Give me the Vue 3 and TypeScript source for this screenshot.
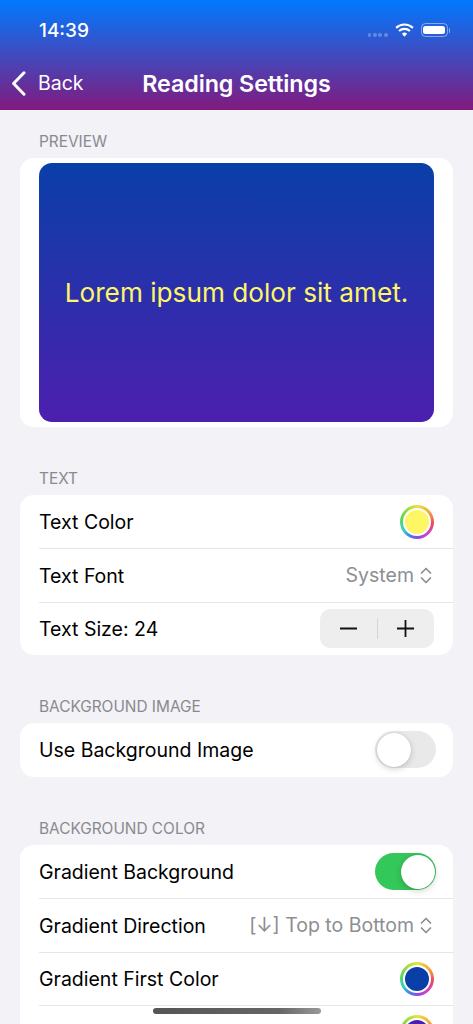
<script setup lang="ts">
type Row = { label: string; kind: 'color' | 'picker' | 'stepper' | 'toggle'; value?: string; on?: boolean };
type Section = { title: string; rows: Row[] };

const sections: Section[] = [
  {
    title: 'TEXT',
    rows: [
      { label: 'Text Color', kind: 'color', value: '#fff666' },
      { label: 'Text Font', kind: 'picker', value: 'System' },
      { label: 'Text Size: 24', kind: 'stepper' },
    ],
  },
  {
    title: 'BACKGROUND IMAGE',
    rows: [{ label: 'Use Background Image', kind: 'toggle', on: false }],
  },
  {
    title: 'BACKGROUND COLOR',
    rows: [
      { label: 'Gradient Background', kind: 'toggle', on: true },
      { label: 'Gradient Direction', kind: 'picker', value: '[↓] Top to Bottom' },
      { label: 'Gradient First Color', kind: 'color', value: '#0a3fa8' },
      { label: 'Gradient Second Color', kind: 'color', value: '#4c1fae' },
    ],
  },
];
</script>

<template>
  <div class="phone">
    <header class="nav">
      <div class="status">
        <span class="time">14:39</span>
        <div class="status-icons">
          <span class="dots"><i></i><i></i><i></i><i></i></span>
          <svg class="wifi" width="19" height="14" viewBox="0 0 20 15" aria-hidden="true">
            <path d="M1 5.2a13 13 0 0 1 18 0" fill="none" stroke="#fff" stroke-width="2.3" />
            <path d="M4.2 8.6a8.4 8.4 0 0 1 11.6 0" fill="none" stroke="#fff" stroke-width="2.3" />
            <path d="M7.2 11.6a4 4 0 0 1 5.6 0L10 14.6z" fill="#fff" />
          </svg>
          <span class="battery"><span class="battery-fill"></span></span>
          <span class="battery-cap"></span>
        </div>
      </div>
      <div class="bar">
        <div class="back">
          <svg width="15" height="25" viewBox="0 0 15 25" aria-hidden="true">
            <path d="M13 1.8 2.6 12.5 13 23.2" fill="none" stroke="#fff" stroke-width="3" stroke-linecap="round" stroke-linejoin="round" />
          </svg>
          <span>Back</span>
        </div>
        <h1>Reading Settings</h1>
      </div>
    </header>

    <main class="content">
      <section class="section first">
        <h2>PREVIEW</h2>
        <div class="card preview-card">
          <div class="preview">Lorem ipsum dolor sit amet.</div>
        </div>
      </section>

      <section v-for="section in sections" :key="section.title" class="section">
        <h2>{{ section.title }}</h2>
        <div class="card">
          <div v-for="row in section.rows" :key="row.label" class="row">
            <span class="label">{{ row.label }}</span>

            <span v-if="row.kind === 'color'" class="well">
              <span class="well-inner" :style="{ background: row.value }"></span>
            </span>

            <span v-else-if="row.kind === 'picker'" class="picker">
              <span>{{ row.value }}</span>
              <svg width="12" height="17" viewBox="0 0 12 17" aria-hidden="true">
                <path d="M1.5 6 6 1.5 10.5 6M1.5 11 6 15.5 10.5 11" fill="none" stroke="#8e8e92" stroke-width="1.7" stroke-linecap="round" stroke-linejoin="round" />
              </svg>
            </span>

            <span v-else-if="row.kind === 'stepper'" class="stepper">
              <svg width="17" height="17" viewBox="0 0 17 17" aria-hidden="true">
                <path d="M0 8.5h17" stroke="#111" stroke-width="1.8" />
              </svg>
              <i class="divider"></i>
              <svg width="17" height="17" viewBox="0 0 17 17" aria-hidden="true">
                <path d="M0 8.5h17M8.5 0v17" stroke="#111" stroke-width="1.8" />
              </svg>
            </span>

            <span v-else class="toggle" :class="{ on: row.on }"><span class="knob"></span></span>
          </div>
        </div>
      </section>
    </main>

    <div class="home"></div>
  </div>
</template>

<style scoped>
.phone {
  position: relative;
  width: 473px;
  height: 1024px;
  overflow: hidden;
  background: #f2f2f7;
  font-family: Inter, "Liberation Sans", sans-serif;
  color: #000;
}
.nav {
  height: 110px;
  box-sizing: border-box;
  background: linear-gradient(180deg, #007aff 0%, #811a7d 100%);
  color: #fff;
}
.status {
  height: 57px;
  padding: 19px 23px 0 39px;
  box-sizing: border-box;
  display: flex;
  justify-content: space-between;
  align-items: flex-start;
}
.time {
  font-size: 19px;
  line-height: 24px;
  font-weight: 500;
}
.status-icons {
  display: flex;
  align-items: center;
  height: 24px;
  margin-top: -1px;
}
.dots {
  display: flex;
  gap: 1.6px;
  margin: 10px 7px 0 0;
}
.dots i {
  width: 3.8px;
  height: 3.8px;
  border-radius: 50%;
  background: rgba(255, 255, 255, 0.28);
}
.wifi {
  margin: 0 7px 0 0;
}
.battery {
  width: 27px;
  height: 14px;
  box-sizing: border-box;
  border: 1.2px solid rgba(255, 255, 255, 0.45);
  border-radius: 4.5px;
  padding: 1.6px;
  display: flex;
}
.battery-fill {
  flex: 1;
  background: #fff;
  border-radius: 2.5px;
}
.battery-cap {
  width: 1.5px;
  height: 5px;
  margin-left: 1px;
  border-radius: 0 1px 1px 0;
  background: rgba(255, 255, 255, 0.5);
}
.bar {
  position: relative;
  height: 53px;
  display: flex;
  align-items: center;
  justify-content: center;
}
.back {
  position: absolute;
  left: 11px;
  top: 14px;
  display: flex;
  align-items: center;
  gap: 12px;
  font-size: 19.5px;
  line-height: 25px;
}
h1 {
  margin: 0;
  font-size: 23.3px;
  line-height: 28px;
  font-weight: 600;
  letter-spacing: -0.1px;
}
.content {
  padding: 0 20px;
}
.section {
  margin-top: 42.3px;
}
.section.first {
  margin-top: 22px;
}
.section.first + .section {
  margin-top: 42px;
}
h2 {
  margin: 0 0 6px 19px;
  font-size: 15.4px;
  line-height: 20px;
  font-weight: 400;
  color: #8a8a8e;
}
.card {
  background: #fff;
  border-radius: 14px;
  padding-left: 19px;
  overflow: hidden;
}
.preview-card {
  padding: 5px 19px;
}
.preview {
  height: 259px;
  border-radius: 13px;
  background: linear-gradient(180deg, #0a3fa8 0%, #4c1fae 100%);
  color: #fff666;
  display: flex;
  align-items: center;
  justify-content: center;
  font-size: 26.2px;
}
.row {
  height: 53.33px;
  box-sizing: border-box;
  padding-right: 19px;
  display: flex;
  align-items: center;
  justify-content: space-between;
  border-top: 1px solid #e6e6e8;
}
.row:first-child {
  border-top: 0;
}
.label {
  font-size: 19.5px;
  padding-top: 1px;
}
.well {
  width: 34px;
  height: 34px;
  border-radius: 50%;
  background: conic-gradient(#e8e53a 0deg, #f3a93a 50deg, #ee4a5a 95deg, #d13fd0 140deg, #8a4be6 180deg, #3f8bee 212deg, #37d1c0 240deg, #5fd84f 285deg, #a8e03e 330deg, #e8e53a 360deg);
  display: flex;
  align-items: center;
  justify-content: center;
}
.well-inner {
  width: 24px;
  height: 24px;
  border-radius: 50%;
  box-shadow: 0 0 0 2px #fff;
}
.picker {
  display: flex;
  align-items: center;
  gap: 6px;
  margin-right: 2px;
  font-size: 19.5px;
  color: #8e8e92;
}
.stepper {
  width: 114px;
  height: 39px;
  border-radius: 10px;
  background: #eeeeef;
  display: flex;
  align-items: center;
  justify-content: space-between;
  padding: 0 20px;
  box-sizing: border-box;
}
.divider {
  width: 1px;
  height: 21px;
  background: #d6d6d8;
}
.toggle {
  width: 61px;
  height: 37px;
  margin-right: -2px;
  border-radius: 19px;
  background: #e9e9ea;
  padding: 1.5px;
  box-sizing: border-box;
  display: flex;
}
.toggle.on {
  background: #34c759;
  justify-content: flex-end;
}
.knob {
  width: 34px;
  height: 34px;
  border-radius: 50%;
  background: #fff;
  box-shadow: 0 2px 6px rgba(0, 0, 0, 0.18), 0 0 1px rgba(0, 0, 0, 0.2);
}
.home {
  position: absolute;
  left: 153px;
  bottom: 10px;
  width: 168px;
  height: 6px;
  border-radius: 3px;
  background: linear-gradient(90deg, #555 0%, #666 75%, #999 100%);
}
</style>
